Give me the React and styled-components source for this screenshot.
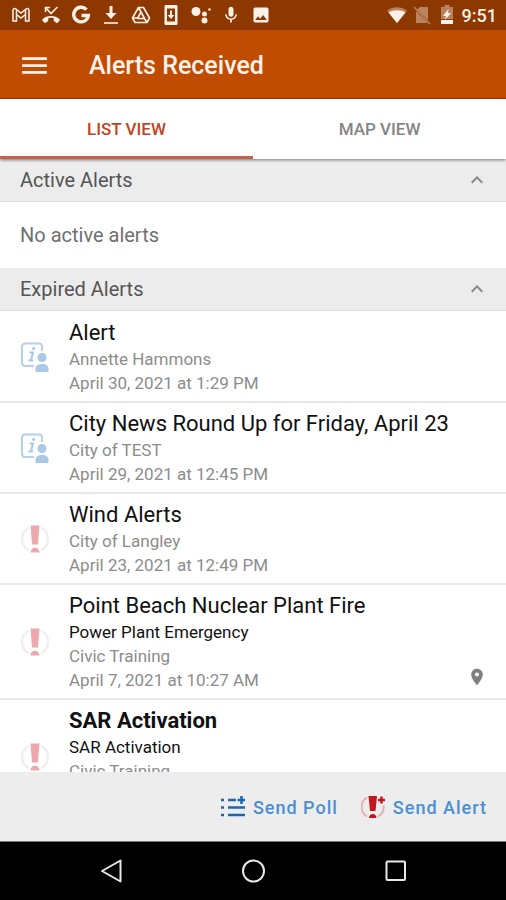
import { useState } from "react";
import styled, { createGlobalStyle } from "styled-components";
import {
  MdImage,
  MdKeyboardArrowUp,
  MdLocationOn,
  MdMenu,
  MdMic,
} from "react-icons/md";

const ALERTS = [
  {
    id: 1,
    type: "info",
    title: "Alert",
    sender: "Annette Hammons",
    date: "April 30, 2021 at 1:29 PM",
  },
  {
    id: 2,
    type: "info",
    title: "City News Round Up for Friday, April 23",
    sender: "City of TEST",
    date: "April 29, 2021 at 12:45 PM",
  },
  {
    id: 3,
    type: "urgent",
    title: "Wind Alerts",
    sender: "City of Langley",
    date: "April 23, 2021 at 12:49 PM",
  },
  {
    id: 4,
    type: "urgent",
    title: "Point Beach Nuclear Plant Fire",
    subject: "Power Plant Emergency",
    sender: "Civic Training",
    date: "April 7, 2021 at 10:27 AM",
    hasLocation: true,
  },
  {
    id: 5,
    type: "urgent",
    title: "SAR Activation",
    subject: "SAR Activation",
    sender: "Civic Training",
    unread: true,
  },
];

function StatusIcons() {
  return (
    <StatusGroup>
      <StatusIcon viewBox="0 0 20 20">
        <path
          d="M2 16V5.5C2 3.6 3.6 3 5 4l5 4 5-4c1.4-1 3-.4 3 1.5V16h-3.5V9.5L10 13 5.5 9.5V16zM5.5 9.5v-5M14.5 9.5v-5"
          fill="none"
          stroke="currentColor"
          strokeWidth="1.5"
        />
      </StatusIcon>
      <StatusIcon viewBox="0 0 20 20">
        <path d="M10 11c-3.3 0-6.2 1.2-8.5 3.2-.5.5-.5 1 0 1.5l2 2c.4.4.9.4 1.3 0l2-1.5c.4-.3.5-.7.5-1.1v-1.9c1.8-.5 3.6-.5 5.4 0v1.9c0 .4.1.8.5 1.1l2 1.5c.4.4.9.4 1.3 0l2-2c.5-.5.5-1 0-1.5C16.2 12.2 13.3 11 10 11z" />
        <path
          d="M4.5 7V2.5H9M4.5 2.5l5.5 6 6.5-6.5"
          fill="none"
          stroke="currentColor"
          strokeWidth="1.6"
        />
      </StatusIcon>
      <StatusIcon viewBox="0 0 20 20">
        <path
          d="M15.5 4.7A7.3 7.3 0 1 0 17.3 10.5H10.5"
          fill="none"
          stroke="currentColor"
          strokeWidth="3.4"
        />
      </StatusIcon>
      <StatusIcon viewBox="0 0 20 20">
        <path d="M8.5 1h3v7h4L10 14 4.5 8h4z" />
        <path d="M3 17h14v2H3z" opacity=".8" />
      </StatusIcon>
      <StatusIcon viewBox="0 0 20 20">
        <path
          d="M7.5 2.5h5l6 10.5-2.5 4.5H4L1.5 13zM10 7l3.5 6.5h-7zM7.5 2.5l2.5 4.5M16 17.5l-2.5-4M1.5 13h5"
          fill="none"
          stroke="currentColor"
          strokeWidth="1.6"
          strokeLinejoin="round"
        />
      </StatusIcon>
      <StatusIcon viewBox="0 0 20 20">
        <path
          fillRule="evenodd"
          d="M5 0h10c1 0 1.5.5 1.5 1.5v17c0 1-.5 1.5-1.5 1.5H5c-1 0-1.5-.5-1.5-1.5v-17C3.5.5 4 0 5 0zM6 3.5v13h8v-13zM9 5.5h2v4.5h2.5L10 14 6.5 10H9z"
        />
      </StatusIcon>
      <StatusIcon viewBox="0 0 20 20">
        <circle cx="5" cy="6.5" r="4.5" />
        <circle cx="13.5" cy="9" r="2.5" />
        <circle cx="13.5" cy="15.5" r="3" />
        <circle cx="18.5" cy="4.5" r="1.2" />
      </StatusIcon>
      <StatusIcon as={MdMic} />
      <StatusIcon as={MdImage} />
    </StatusGroup>
  );
}

function AlertIcon({ type }) {
  if (type === "info") {
    return (
      <TypeIcon viewBox="0 0 30 30" aria-hidden="true">
        <path
          d="M22 9V4.5a3 3 0 0 0-3-3H5a3 3 0 0 0-3 3V21a3 3 0 0 0 3 3h9"
          fill="none"
          stroke="#b4d0ea"
          strokeWidth="2"
        />
        <circle cx="13.5" cy="6.5" r="1.6" fill="#a9c9e6" />
        <path
          d="M9.5 10.5h3.5l-2 8M8.5 18.5h4.5"
          fill="none"
          stroke="#a9c9e6"
          strokeWidth="2"
        />
        <circle cx="22" cy="15.5" r="4.5" fill="#a9c9e6" />
        <path d="M15.5 30v-3c0-3.5 2.5-5 6.5-5s6.5 1.5 6.5 5v3z" fill="#a9c9e6" />
      </TypeIcon>
    );
  }
  return (
    <TypeIcon viewBox="0 0 30 30" aria-hidden="true">
      <path
        d="M9 3.5a13 13 0 0 0 0 23M21 3.5a13 13 0 0 1 0 23"
        fill="none"
        stroke="#edf0f0"
        strokeWidth="2.5"
      />
      <path d="M10.5 1.5h9l-1.5 19h-6z" fill="#eba9ae" />
      <path d="M10.5 28.5c0-6.5 9-6.5 9 0z" fill="#eba9ae" />
    </TypeIcon>
  );
}

function Section({ title, children }) {
  const [open, setOpen] = useState(true);

  return (
    <section>
      <SectionHeader
        type="button"
        aria-expanded={open}
        onClick={() => setOpen((o) => !o)}
      >
        {title}
        <Chevron $open={open} />
      </SectionHeader>
      {open && children}
    </section>
  );
}

function AlertRow({ alert }) {
  return (
    <Row>
      <AlertIcon type={alert.type} />
      <RowText>
        <RowTitle $unread={alert.unread}>{alert.title}</RowTitle>
        {alert.subject && <Subject>{alert.subject}</Subject>}
        <Meta>{alert.sender}</Meta>
        <Meta>{alert.date || "\u00a0"}</Meta>
      </RowText>
      {alert.hasLocation && <Pin aria-label="Has location" />}
    </Row>
  );
}

function App() {
  const [view, setView] = useState("list");

  return (
    <Screen>
      <GlobalStyle />
      <StatusBar>
        <StatusIcons />
        <StatusRight>
          <StatusIcon viewBox="0 0 20 20">
            <path d="M10 18L0 5.5C6 1 14 1 20 5.5z" opacity=".4" />
            <path d="M10 18L1.5 7.5C6 4.5 14 4.5 18.5 7.5z" />
          </StatusIcon>
          <StatusIcon viewBox="0 0 20 20" opacity=".4">
            <path d="M8 2h8v13L5 4.5zM4 6l12 12H4z" />
            <path d="M2 2l16 17" stroke="currentColor" strokeWidth="1.5" />
          </StatusIcon>
          <StatusIcon viewBox="0 0 20 20">
            <path d="M7.5 0h5v2H16v12H4V2h3.5z" opacity=".4" />
            <path d="M4 15h12v4H4z" />
            <path d="M11.5 4L6 11h3l-1 4 6-7h-3z" />
          </StatusIcon>
          <Clock>9:51</Clock>
        </StatusRight>
      </StatusBar>

      <AppBar>
        <MenuButton type="button" aria-label="Open menu">
          <MdMenu />
        </MenuButton>
        <PageTitle>Alerts Received</PageTitle>
      </AppBar>

      <Tabs role="tablist">
        <Tab
          type="button"
          role="tab"
          aria-selected={view === "list"}
          $active={view === "list"}
          onClick={() => setView("list")}
        >
          LIST VIEW
        </Tab>
        <Tab
          type="button"
          role="tab"
          aria-selected={view === "map"}
          $active={view === "map"}
          onClick={() => setView("map")}
        >
          MAP VIEW
        </Tab>
      </Tabs>

      <Content>
        <Section title="Active Alerts">
          <EmptyText>No active alerts</EmptyText>
        </Section>
        <Section title="Expired Alerts">
          <List>
            {ALERTS.map((alert) => (
              <AlertRow key={alert.id} alert={alert} />
            ))}
          </List>
        </Section>
      </Content>

      <Actions>
        <ActionButton type="button">
          <ActionIcon viewBox="0 0 24 24" aria-hidden="true">
            <path
              d="M0 5h3M0 12.5h3M0 20h3M7 5h8M7 12.5h17M7 20h17M16.5 5h7.5M20.5 1v8"
              stroke="#1d65ae"
              strokeWidth="2.5"
            />
          </ActionIcon>
          Send Poll
        </ActionButton>
        <ActionButton type="button">
          <ActionIcon viewBox="0 0 24 24" aria-hidden="true">
            <path
              d="M6 2.5a11 11 0 0 0 0 19M17 21.5a11 11 0 0 0 5.5-11"
              fill="none"
              stroke="#e6b0b5"
              strokeWidth="2"
            />
            <path d="M7.5 1h8.5l-1.5 15H9zM8 23c0-5.5 7.5-5.5 7.5 0z" fill="#c4161c" />
            <path d="M17 5h7M20.5 1.5v7" stroke="#c4161c" strokeWidth="2.5" />
          </ActionIcon>
          Send Alert
        </ActionButton>
      </Actions>

      <NavBar>
        <NavButton type="button" aria-label="Back">
          <svg viewBox="0 0 26 26">
            <path d="M22.5 2.5v21L4 13z" />
          </svg>
        </NavButton>
        <NavButton type="button" aria-label="Home">
          <svg viewBox="0 0 26 26">
            <circle cx="13.5" cy="13" r="10.5" />
          </svg>
        </NavButton>
        <NavButton type="button" aria-label="Recent apps">
          <svg viewBox="0 0 26 26">
            <rect x="4.5" y="3.5" width="18.5" height="18.5" rx="1" />
          </svg>
        </NavButton>
      </NavBar>
    </Screen>
  );
}

export default App;

const GlobalStyle = createGlobalStyle`
  * {
    box-sizing: border-box;
  }

  body {
    margin: 0;
    font-family: Roboto, "Liberation Sans", sans-serif;
  }

  button {
    border: 0;
    padding: 0;
    background: none;
    font-family: inherit;
    cursor: pointer;
  }
`;

const Screen = styled.div`
  display: flex;
  flex-direction: column;
  height: 100vh;
  background-color: #ffffff;
`;

const StatusBar = styled.div`
  display: flex;
  align-items: center;
  justify-content: space-between;
  flex: none;
  height: 30px;
  padding: 0 9px 0 11px;
  background-color: #8c3800;
  color: #fff1e8;
`;

const StatusGroup = styled.div`
  display: flex;
  align-items: center;
  gap: 10px;
`;

const StatusRight = styled.div`
  display: flex;
  align-items: center;
  gap: 5px;
`;

const StatusIcon = styled.svg`
  flex: none;
  width: 20px;
  height: 20px;
  fill: currentColor;
`;

const Clock = styled.span`
  font-size: 18px;
  font-weight: 500;
`;

const AppBar = styled.header`
  display: flex;
  align-items: center;
  gap: 38px;
  flex: none;
  height: 69px;
  padding: 2px 18px 0;
  border-bottom: 1px solid #b52e10;
  background-color: #bf4c00;
  color: #fff1ec;
`;

const MenuButton = styled.button`
  display: flex;
  color: inherit;
  font-size: 33px;
`;

const PageTitle = styled.h1`
  margin: 0;
  font-size: 25px;
  font-weight: 500;
`;

const Tabs = styled.div`
  display: flex;
  flex: none;
  height: 60px;
  z-index: 1;
  box-shadow: 0 1px 3px rgba(0, 0, 0, 0.5);
  background-color: #ffffff;
`;

const Tab = styled.button`
  flex: 1;
  border-top: 3px solid transparent;
  border-bottom: 3px solid ${({ $active }) => ($active ? "#c4614c" : "transparent")};
  color: ${({ $active }) => ($active ? "#c04420" : "#858585")};
  font-size: 17px;
  font-weight: 500;
`;

const Content = styled.main`
  flex: 1;
  min-height: 0;
  overflow-y: auto;
  scrollbar-width: none;
`;

const SectionHeader = styled.button`
  display: flex;
  align-items: center;
  justify-content: space-between;
  width: 100%;
  height: 43px;
  padding: 0 17px 0 20px;
  border-bottom: 1px solid #e0e0e0;
  background-color: #ececec;
  color: #555555;
  font-size: 20px;
`;

const Chevron = styled(MdKeyboardArrowUp)`
  color: #888888;
  font-size: 24px;
  transform: ${({ $open }) => ($open ? "none" : "rotate(180deg)")};
`;

const EmptyText = styled.p`
  margin: 0;
  padding: 20px;
  color: #707070;
  font-size: 20px;
  line-height: 26px;
`;

const List = styled.ul`
  margin: 0;
  padding: 0;
  list-style: none;
`;

const Row = styled.li`
  display: flex;
  align-items: center;
  gap: 19px;
  padding: 8px 19px 6px 20px;
  border-bottom: 2px solid #e8e8e8;

  & + & {
    padding-top: 7px;
  }
`;

const TypeIcon = styled.svg`
  flex: none;
  width: 30px;
  height: 30px;
`;

const RowText = styled.div`
  flex: 1;
  min-width: 0;
`;

const RowTitle = styled.h2`
  margin: 0;
  color: #111111;
  font-size: 22px;
  font-weight: ${({ $unread }) => ($unread ? 700 : 400)};
  line-height: 28px;
`;

const Subject = styled.p`
  margin: 0;
  color: #111111;
  font-size: 17px;
  line-height: 24px;
`;

const Meta = styled(Subject)`
  color: #8c8c8c;
`;

const Pin = styled(MdLocationOn)`
  align-self: flex-end;
  flex: none;
  margin-bottom: 5px;
  color: #808080;
  font-size: 20px;
`;

const Actions = styled.footer`
  display: flex;
  align-items: center;
  justify-content: flex-end;
  gap: 23px;
  flex: none;
  height: 69px;
  padding: 1px 19px 0;
  background-color: #ededed;
`;

const ActionButton = styled.button`
  display: flex;
  align-items: center;
  gap: 8px;
  color: #4a8fd6;
  font-size: 18px;
  font-weight: 500;
  letter-spacing: 1px;
`;

const ActionIcon = styled.svg`
  width: 24px;
  height: 24px;
`;

const NavBar = styled.nav`
  display: flex;
  align-items: center;
  justify-content: center;
  flex: none;
  height: 59px;
  border-top: 1px solid #777777;
  background-color: #000000;
`;

const NavButton = styled.button`
  display: flex;
  justify-content: center;
  width: 28%;

  svg {
    width: 26px;
    height: 26px;
    fill: none;
    stroke: #e8e8e8;
    stroke-width: 2;
    stroke-linejoin: round;
  }
`;
